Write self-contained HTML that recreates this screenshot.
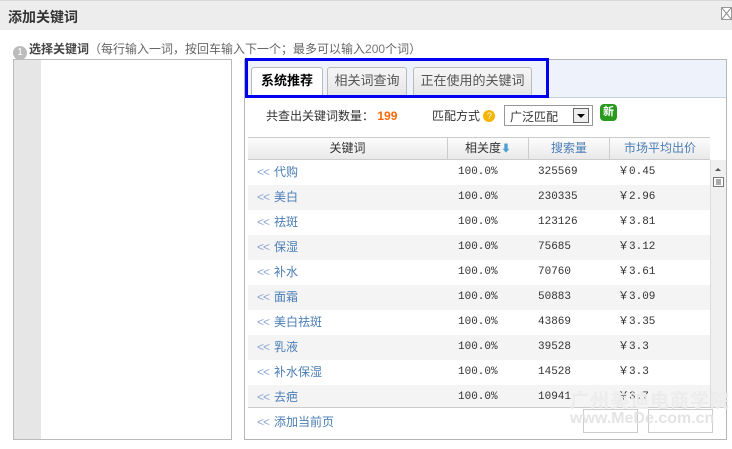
<!DOCTYPE html>
<html><head><meta charset="utf-8"><style>
*{margin:0;padding:0;box-sizing:border-box}
body{width:732px;height:449px;background:#fff;font-family:"Liberation Sans","Noto Sans CJK SC",sans-serif;font-size:12px;color:#333;position:relative;overflow:hidden}
.abs{position:absolute}
.title{left:0;top:0;width:732px;height:30px;background:#ededed;border-top:1px solid #d8d8d8}
.title span{position:absolute;left:8px;top:6px;font-size:14px;font-weight:bold;color:#333}
.close{left:721px;top:7px;width:11px;height:13px;border:1px solid #999;background:#fff}
.step{left:13px;top:40px;font-size:12px;color:#666;white-space:nowrap}
.step b{color:#444}
.num{display:inline-block;width:14px;height:14px;border-radius:7px;background:#bbb;color:#fff;font-size:10px;text-align:center;line-height:14px;vertical-align:-2px;margin-right:2px}
.ta{left:13px;top:59px;width:219px;height:381px;border:1px solid #bbb}
.gut{left:14px;top:60px;width:27px;height:379px;background:#e6e6e6}
.panel{left:244px;top:59px;width:483px;height:381px;border:1px solid #b5b5b5;background:#fff}
.tabbar{left:245px;top:60px;width:481px;height:38px;background:#eef3fb;border-bottom:1px solid #c6d0dc}
.tab{top:67px;height:28px;border:1px solid #bbb;border-bottom:none;background:linear-gradient(#f6f6f6,#e6e6e6);border-radius:3px 3px 0 0;text-align:center;line-height:26px;font-size:13px;color:#555}
.blue{left:245px;top:58px;width:304px;height:40px;border:3px solid #0000ee}
.cnt{left:266px;top:107px;font-size:12px}
.cnt b{color:#f60}
.sel{left:504px;top:105px;width:89px;height:21px;border:1px solid #999;background:#fff;font-size:12px;padding:2px 5px}
.arr{left:573px;top:108px;width:16px;height:15px;border:1px solid #666;background:#eee}
.hd{left:248px;top:137px;width:462px;height:23px;background:linear-gradient(#fcfcfc,#e9e9e9);border-top:1px solid #ccc;border-bottom:1px solid #ccc}
.hc{position:absolute;top:0;height:22px;line-height:21px;text-align:center;border-right:1px solid #ccc;font-size:12px}
.row{position:absolute;left:248px;width:462px;height:25px;line-height:25px;font-size:12px}
.row .k{position:absolute;left:9px;color:#4a7db5}
.row .k i{font-style:normal;color:#8aa6cf;margin-right:5px;letter-spacing:-1px}
.row .r{position:absolute;left:210px;font-family:"Liberation Mono","Noto Sans CJK SC",monospace;font-size:11px}
.row .s{position:absolute;left:290px;font-family:"Liberation Mono",monospace;font-size:11px}
.row .p{position:absolute;left:370px;font-family:"Liberation Mono","Noto Sans CJK SC",monospace;font-size:11px}
.sb{left:710px;top:160px;width:16px;height:247px;background:#f0f0f0;border-left:1px solid #ddd}
.foot{left:248px;top:407px;width:478px;height:1px;background:#ccc}
.pg{top:409px;height:24px;border:1px solid #ccc;background:#fff}
</style></head><body>
<div class="abs title"><span>添加关键词</span></div>
<div class="abs close"><svg width="9" height="11"><path d="M0 0L9 11M9 0L0 11" stroke="#888" stroke-width="1"/></svg></div>
<div class="abs step"><span class="num">1</span><b>选择关键词</b>（每行输入一词，按回车输入下一个；最多可以输入<span style="color:#777">200</span>个词）</div>
<div class="abs ta"></div><div class="abs gut"></div>
<div class="abs panel"></div>
<div class="abs tabbar"></div>
<div class="abs tab" style="left:251px;width:72px;background:#fff;color:#000;font-weight:bold;height:31px">系统推荐</div>
<div class="abs tab" style="left:327px;width:80px">相关词查询</div>
<div class="abs tab" style="left:413px;width:119px">正在使用的关键词</div>
<div class="abs blue"></div>
<div class="abs cnt">共查出关键词数量： <b>199</b></div>
<div class="abs" style="left:432px;top:107px">匹配方式 <span style="display:inline-block;width:12px;height:12px;border-radius:6px;background:#f5b400;color:#fff;font-size:9px;text-align:center;line-height:12px;vertical-align:1px">?</span></div>
<div class="abs sel">广泛匹配</div>
<div class="abs arr"><svg width="14" height="13"><path d="M3 5h8l-4 4z" fill="#000"/></svg></div>
<div class="abs" style="left:600px;top:104px;width:17px;height:17px;background:#2a9a1f;border-radius:4px;color:#fff;font-size:11px;text-align:center;line-height:17px;font-weight:bold">新</div>
<div class="abs hd">
<div class="hc" style="left:0;width:200px">关键词</div>
<div class="hc" style="left:200px;width:81px">相关度<span style="color:#4a9fd5;font-size:10px">⬇</span></div>
<div class="hc" style="left:281px;width:81px;color:#4a7db5">搜索量</div>
<div class="hc" style="left:362px;width:100px;color:#4a7db5;border:none">市场平均出价</div>
</div>
<div class="row" style="top:160px;background:#fff"><span class="k"><i>&lt;&lt;</i>代购</span><span class="r">100.0%</span><span class="s">325569</span><span class="p">￥0.45</span></div>
<div class="row" style="top:185px;background:#f4f4f4"><span class="k"><i>&lt;&lt;</i>美白</span><span class="r">100.0%</span><span class="s">230335</span><span class="p">￥2.96</span></div>
<div class="row" style="top:210px;background:#fff"><span class="k"><i>&lt;&lt;</i>祛斑</span><span class="r">100.0%</span><span class="s">123126</span><span class="p">￥3.81</span></div>
<div class="row" style="top:235px;background:#f4f4f4"><span class="k"><i>&lt;&lt;</i>保湿</span><span class="r">100.0%</span><span class="s">75685</span><span class="p">￥3.12</span></div>
<div class="row" style="top:260px;background:#fff"><span class="k"><i>&lt;&lt;</i>补水</span><span class="r">100.0%</span><span class="s">70760</span><span class="p">￥3.61</span></div>
<div class="row" style="top:285px;background:#f4f4f4"><span class="k"><i>&lt;&lt;</i>面霜</span><span class="r">100.0%</span><span class="s">50883</span><span class="p">￥3.09</span></div>
<div class="row" style="top:310px;background:#fff"><span class="k"><i>&lt;&lt;</i>美白祛斑</span><span class="r">100.0%</span><span class="s">43869</span><span class="p">￥3.35</span></div>
<div class="row" style="top:335px;background:#f4f4f4"><span class="k"><i>&lt;&lt;</i>乳液</span><span class="r">100.0%</span><span class="s">39528</span><span class="p">￥3.3</span></div>
<div class="row" style="top:360px;background:#fff"><span class="k"><i>&lt;&lt;</i>补水保湿</span><span class="r">100.0%</span><span class="s">14528</span><span class="p">￥3.3</span></div>
<div class="row" style="top:385px;background:#f4f4f4;height:22px;overflow:hidden"><span class="k"><i>&lt;&lt;</i>去疤</span><span class="r">100.0%</span><span class="s">10941</span><span class="p">￥3.7</span></div>
<div class="abs sb"><svg width="15" height="30"><path d="M4 11l3-3 3 3z" fill="#555"/><rect x="2.5" y="17.5" width="10" height="9" fill="#fff" stroke="#777"/><path d="M5 20h5M5 22h5M5 24h5" stroke="#555"/></svg></div>
<div class="abs foot"></div>
<div class="abs" style="left:257px;top:413px;color:#4a7db5;font-size:12px"><span style="color:#8aa6cf;letter-spacing:-1px;margin-right:5px">&lt;&lt;</span>添加当前页</div>
<div class="abs pg" style="left:583px;width:55px"></div>
<div class="abs pg" style="left:648px;width:65px"></div>
<div class="abs" style="left:570px;top:386px;font-size:19px;font-weight:bold;color:rgba(235,235,235,.9);letter-spacing:1px">广州美迪电商学院</div>
<div class="abs" style="left:570px;top:410px;font-size:16px;font-weight:bold;color:rgba(225,225,225,.9)">www.MeDe.com.cn</div>
</body></html>
